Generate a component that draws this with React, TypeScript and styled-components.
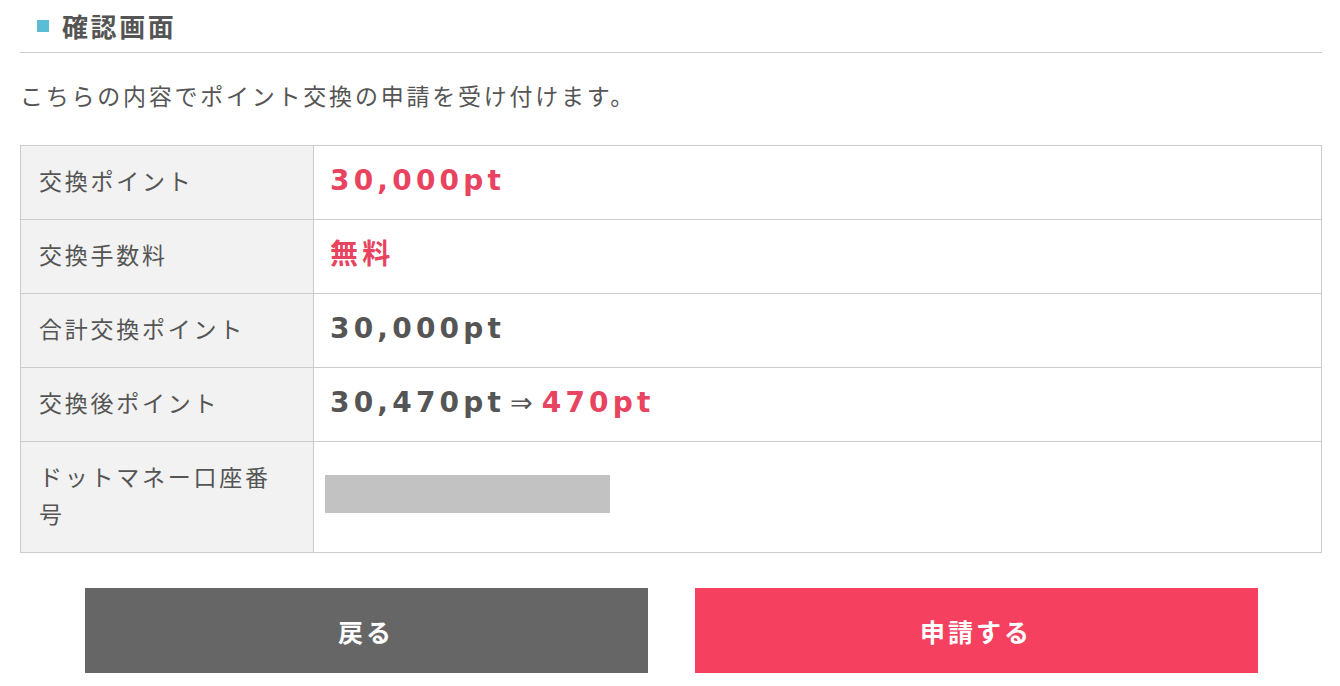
import styled, { createGlobalStyle } from 'styled-components'

const GlobalStyle = createGlobalStyle`
  body {
    margin: 0;
    background: #fff;
    color: #555;
    font-family: "DejaVu Sans", "Noto Sans CJK JP", sans-serif;
  }
`

const Page = styled.div`
  width: 1302px;
  padding: 0 18px 0 20px;
`

const Heading = styled.h2`
  display: flex;
  align-items: center;
  gap: 13px;
  margin: 8px 0 0;
  padding: 0 0 8px 17px;
  border-bottom: 1px solid #ccc;
  font-family: "Noto Sans CJK JP", sans-serif;
  font-size: 26px;
  line-height: 36px;
  font-weight: bold;
  letter-spacing: 0.1em;
  color: #555;

  &::before {
    content: '';
    width: 12px;
    height: 12px;
    background: #5bbcd6;
    flex-shrink: 0;
  }
`

const Lead = styled.p`
  margin: 25px 0 29px;
  font-size: 23px;
  line-height: 38px;
  letter-spacing: 0.12em;
  color: #555;
`

const Table = styled.table`
  width: 100%;
  border-collapse: collapse;
  table-layout: fixed;
`

const Label = styled.th`
  width: 293px;
  box-sizing: border-box;
  padding: 18px 18px;
  background: #f2f2f2;
  border: 1px solid #ccc;
  text-align: left;
  vertical-align: middle;
  font-size: 23px;
  font-weight: normal;
  line-height: 37px;
  letter-spacing: 0.12em;
  color: #555;
`

const Value = styled.td`
  padding: 0 16px;
  border: 1px solid #ccc;
  vertical-align: middle;
  line-height: 37px;
`

const Amount = styled.span<{ $red?: boolean }>`
  font-size: 28px;
  font-weight: bold;
  letter-spacing: 0.15em;
  color: ${({ $red }) => ($red ? '#e8435f' : '#555')};
`

const Arrow = styled.span`
  font-size: 27px;
  font-weight: normal;
  color: #555;
  margin: 0 9px 0 5px;
`

const Masked = styled.div`
  width: 285px;
  height: 38px;
  margin: -6px 0 0 -5px;
  background: #c2c2c2;
`

const Actions = styled.div`
  display: flex;
  justify-content: center;
  gap: 47px;
  margin-top: 35px;
`

const Button = styled.button<{ $primary?: boolean }>`
  width: 563px;
  height: 85px;
  border: none;
  background: ${({ $primary }) => ($primary ? '#f5415f' : '#666')};
  color: #fff;
  font-family: "Noto Sans CJK JP", sans-serif;
  font-size: 25px;
  font-weight: bold;
  letter-spacing: 0.12em;
  cursor: pointer;
`

export default function App() {
  return (
    <Page>
      <GlobalStyle />
      <Heading>確認画面</Heading>
      <Lead>こちらの内容でポイント交換の申請を受け付けます。</Lead>
      <Table>
        <tbody>
          <tr>
            <Label>交換ポイント</Label>
            <Value>
              <Amount $red>30,000pt</Amount>
            </Value>
          </tr>
          <tr>
            <Label>交換手数料</Label>
            <Value>
              <Amount $red>無料</Amount>
            </Value>
          </tr>
          <tr>
            <Label>合計交換ポイント</Label>
            <Value>
              <Amount>30,000pt</Amount>
            </Value>
          </tr>
          <tr>
            <Label>交換後ポイント</Label>
            <Value>
              <Amount>30,470pt</Amount>
              <Arrow>⇒</Arrow>
              <Amount $red>470pt</Amount>
            </Value>
          </tr>
          <tr>
            <Label>ドットマネー口座番号</Label>
            <Value>
              <Masked />
            </Value>
          </tr>
        </tbody>
      </Table>
      <Actions>
        <Button>戻る</Button>
        <Button $primary>申請する</Button>
      </Actions>
    </Page>
  )
}
